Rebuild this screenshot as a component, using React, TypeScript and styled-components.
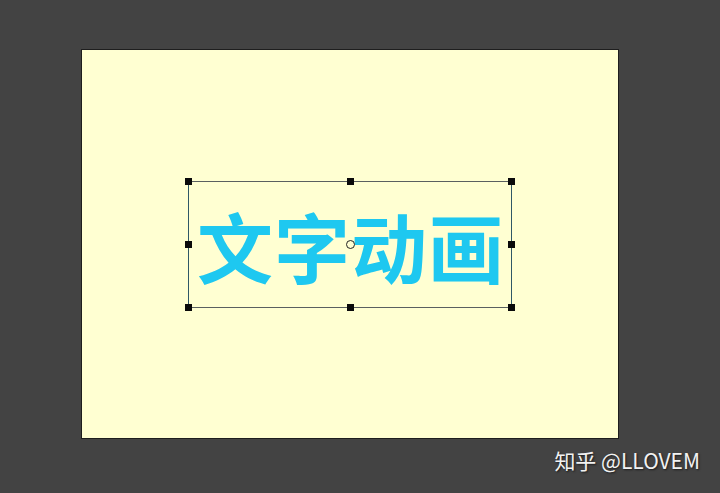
import { FC, ReactElement } from 'react'
import styled, { createGlobalStyle } from 'styled-components'

const GlobalStyle = createGlobalStyle`
  html, body {
    margin: 0;
    padding: 0;
    background: #434343;
  }
  body {
    font-family: 'Noto Sans CJK SC', 'Noto Sans', sans-serif;
  }
`

type HandleProps = { $x: 'l' | 'c' | 'r'; $y: 't' | 'm' | 'b' }

const handles: HandleProps[] = [
  { $x: 'l', $y: 't' }, { $x: 'c', $y: 't' }, { $x: 'r', $y: 't' },
  { $x: 'l', $y: 'm' }, { $x: 'r', $y: 'm' },
  { $x: 'l', $y: 'b' }, { $x: 'c', $y: 'b' }, { $x: 'r', $y: 'b' },
]

const App: FC = (): ReactElement => {
  return (
    <>
      <GlobalStyle />
      <Page>
        <Canvas>
          <Selection>
            <Title>文字动画</Title>
            {handles.map((h, i) => (
              <Handle key={i} $x={h.$x} $y={h.$y} />
            ))}
            <Pivot />
          </Selection>
        </Canvas>
        <Watermark>知乎 @LLOVEM</Watermark>
      </Page>
    </>
  )
}

const Page = styled.div`
  position: relative;
  width: 720px;
  height: 493px;
  padding: 49px 101px 0 81px;
  box-sizing: border-box;
  background: #434343;
  overflow: hidden;
`
const Canvas = styled.div`
  width: 538px;
  height: 390px;
  box-sizing: border-box;
  background: #ffffd2;
  border: 1px solid #1e1e1e;
  display: flex;
  align-items: center;
  justify-content: center;
`
const Selection = styled.div`
  position: relative;
  width: 324px;
  height: 127px;
  box-sizing: border-box;
  border: 1px solid #5a6060;
  border-left-color: #2f5866;
  border-right-color: #2f5866;
  display: flex;
  align-items: center;
  justify-content: center;
`
const Title = styled.div`
  font-family: 'Noto Sans CJK SC', sans-serif;
  font-weight: 700;
  font-size: 76px;
  line-height: 1;
  color: #1ec8f0;
  letter-spacing: 1px;
  margin-left: 2px;
  margin-top: 1px;
  white-space: nowrap;
`
const Handle = styled.span<HandleProps>`
  position: absolute;
  width: 7px;
  height: 7px;
  background: #0a0a0a;
  left: ${p => (p.$x === 'l' ? '-4px' : p.$x === 'c' ? 'calc(50% - 3.5px)' : 'calc(100% - 3px)')};
  top: ${p => (p.$y === 't' ? '-4px' : p.$y === 'm' ? 'calc(50% - 3.5px)' : 'calc(100% - 3px)')};
`
const Pivot = styled.span`
  position: absolute;
  width: 7px;
  height: 7px;
  border: 1px solid #222;
  border-radius: 50%;
  background: #ffffd2;
  left: calc(50% - 4.5px);
  top: calc(50% - 4.5px);
`
const Watermark = styled.div`
  position: absolute;
  right: 20px;
  bottom: 18px;
  font-family: 'Noto Sans CJK SC', 'Noto Sans', sans-serif;
  font-size: 21px;
  color: #f2f2f2;
  text-shadow: 1px 1px 2px rgba(0, 0, 0, 0.6);
  white-space: nowrap;
`

export default App
